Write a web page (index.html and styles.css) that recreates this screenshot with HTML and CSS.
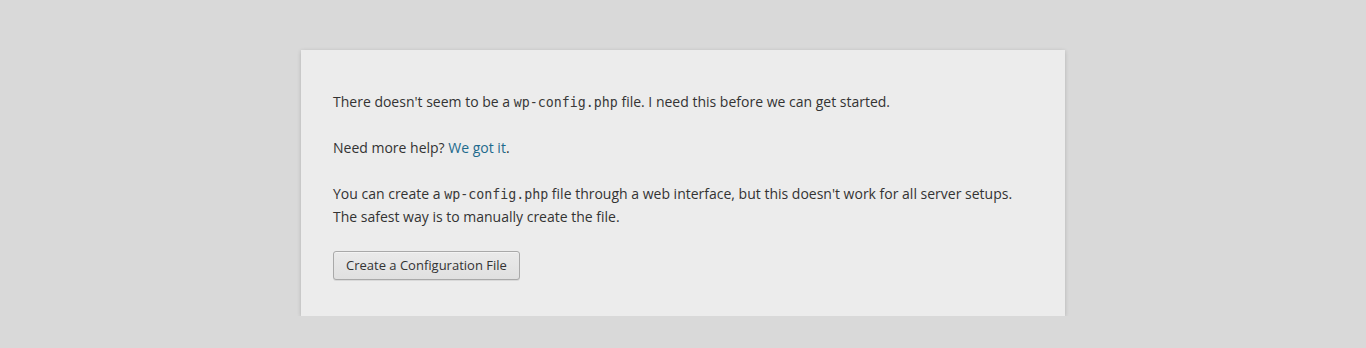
FILE: index.html
```html
<!DOCTYPE html>
<html lang="en">
<head>
  <meta charset="UTF-8">
  <title>WordPress &rsaquo; Setup Configuration File</title>
  <link rel="stylesheet" href="styles.css">
</head>
<body>
  <div class="setup-box">
    <p>There doesn't seem to be a <code>wp-config.php</code> file. I need this before we can get started.</p>
    <p>Need more help? <a href="#">We got it</a>.</p>
    <p>You can create a <code>wp-config.php</code> file through a web interface, but this doesn't work for all server setups. The safest way is to manually create the file.</p>
    <p class="step"><a href="#" class="button">Create a Configuration File</a></p>
  </div>
</body>
</html>
```
FILE: styles.css
```css
html {
  background-color: #d9d9d9;
}

body {
  margin: 0;
  padding: 50px 0 0;
  font-family: "Open Sans", "Liberation Sans", sans-serif;
  font-size: 14px;
  line-height: 23px;
  color: #333;
}

.setup-box {
  max-width: 700px;
  margin: 0 auto;
  padding: 17px 32px 13px;
  background-color: #ececec;
  box-shadow: 0 1px 4px rgba(0, 0, 0, 0.18);
}

p {
  margin: 23px 0;
}

code {
  font-family: "DejaVu Sans Mono", "Liberation Mono", monospace;
  font-size: 13.3px;
  line-height: 0;
  color: #3a3a3a;
}

a {
  color: #1e6a8d;
  text-decoration: none;
}

.step {
  display: flex;
  margin: 23px 0;
}

.button {
  height: 27px;
  padding: 0 12px;
  line-height: 27px;
  font-size: 13px;
  color: #333;
  background-color: #e6e6e6;
  background-image: linear-gradient(to bottom, #eaeaea, #e0e0e0);
  border: 1px solid #a9a9a9;
  border-radius: 3px;
  box-shadow: inset 0 1px 0 #f3f3f3, 0 1px 0 rgba(0, 0, 0, 0.08);
}
```
